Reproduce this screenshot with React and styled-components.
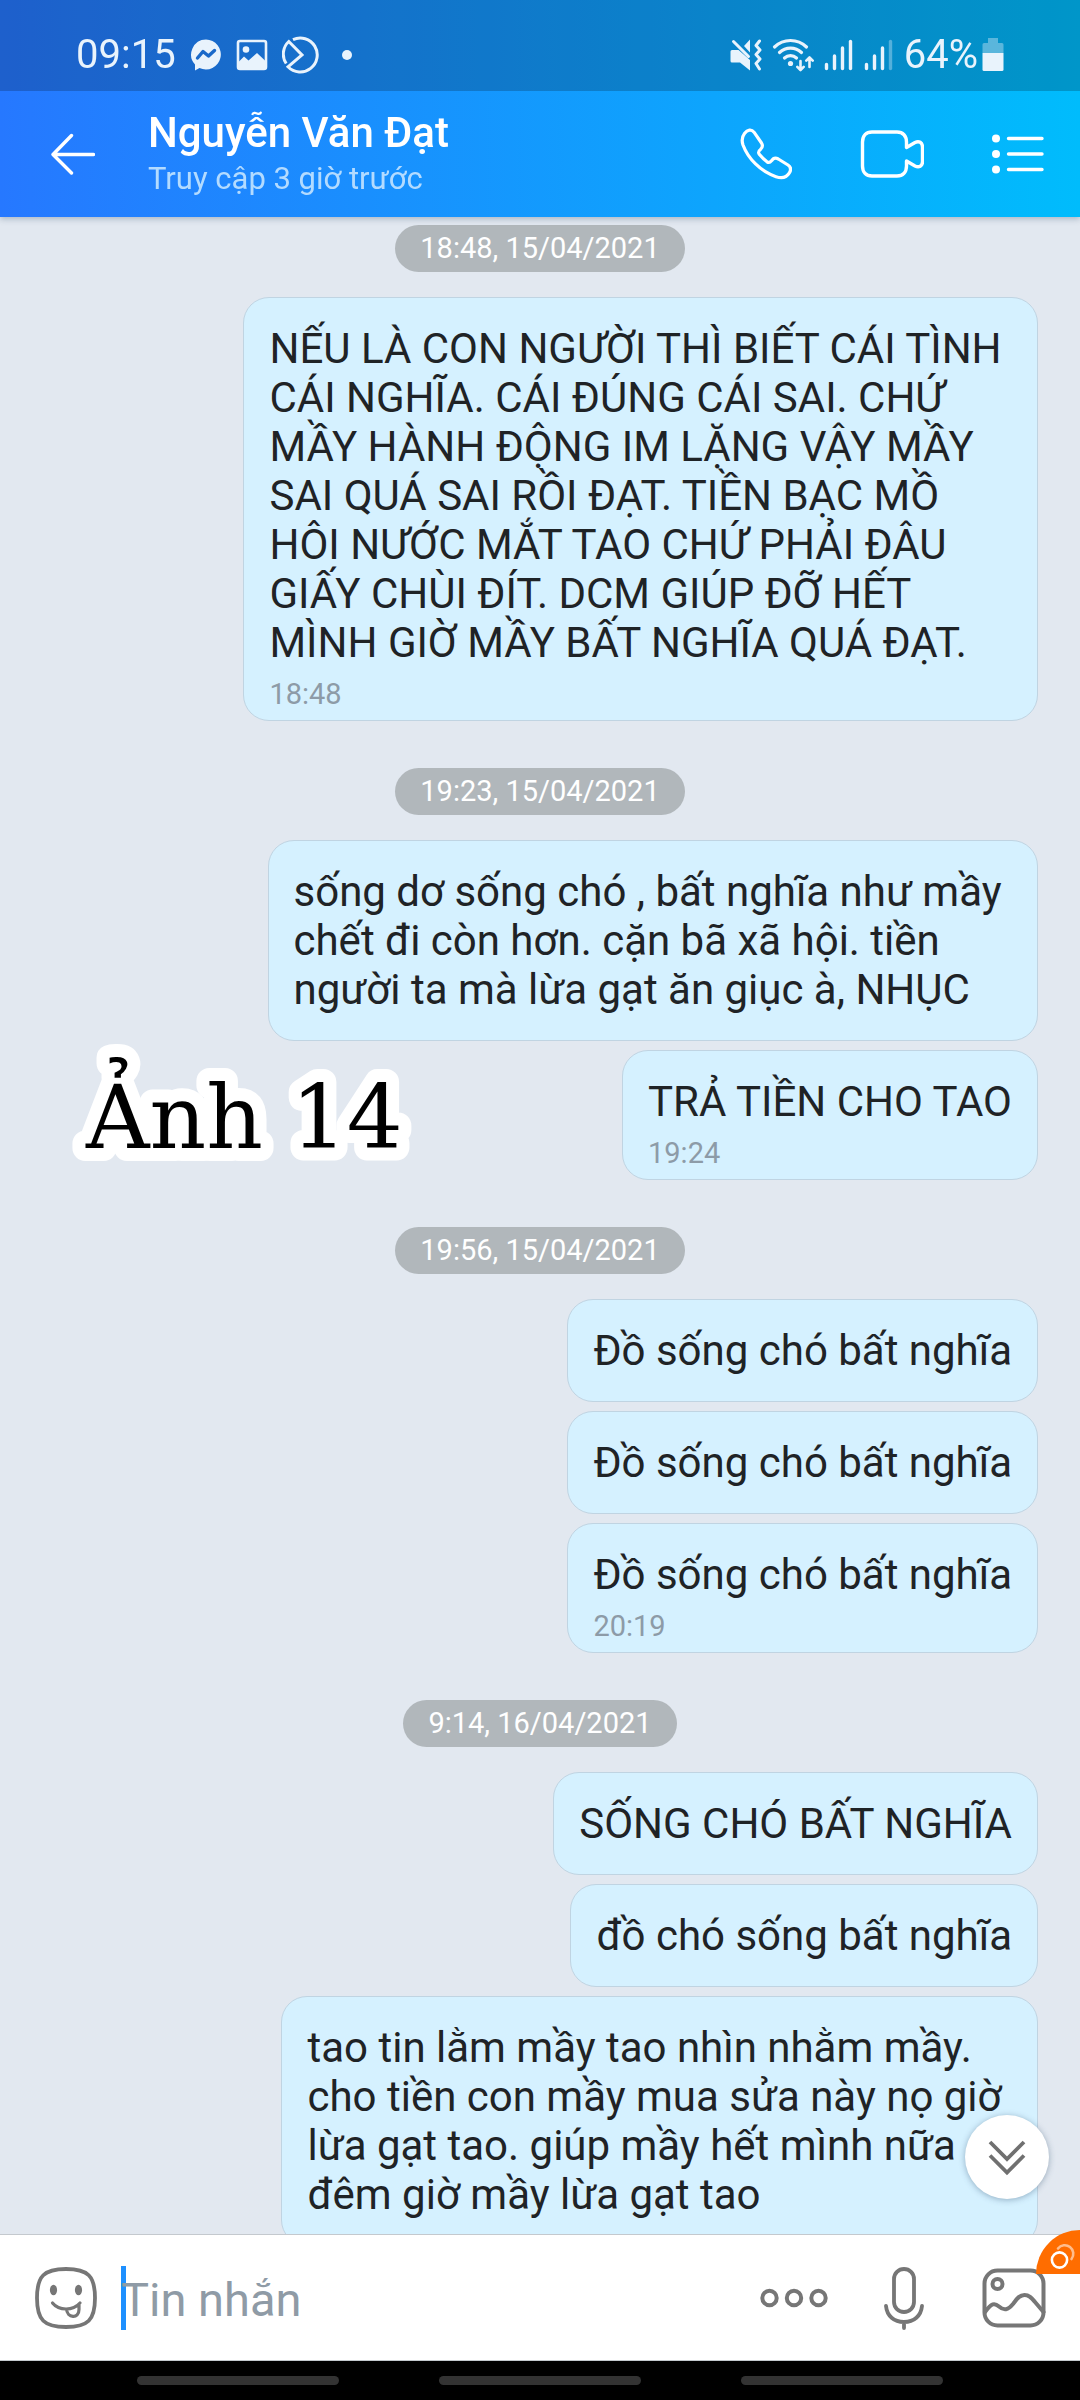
import React from "react";
import styled, { createGlobalStyle } from "styled-components";

const GlobalStyle = createGlobalStyle`
  * { box-sizing: border-box; }
  body { margin: 0; background: #000; }
  button, input { font: inherit; }
`;

const Screen = styled.div`
  position: relative;
  display: flex;
  flex-direction: column;
  height: 100vh;
  overflow: hidden;
  font-family: Roboto, "Noto Sans", sans-serif;
  color: #1f2326;
`;

const TopArea = styled.div`
  position: relative;
  z-index: 1;
  background: linear-gradient(90deg, #2678ff, #00bcfc);
  box-shadow: 0 2px 6px rgba(40, 70, 100, 0.3);
`;

const StatusBar = styled.div`
  display: flex;
  align-items: center;
  justify-content: space-between;
  height: 91px;
  padding: 18px 76px 0 76px;
  background: rgba(0, 0, 0, 0.2);
  color: #e9f3fc;
  font-size: 40px;
  line-height: 48px;
`;

const StatusGroup = styled.div`
  display: flex;
  align-items: center;
  gap: ${(p) => p.$gap}px;
`;

const Icon = styled.svg`
  display: block;
  flex: none;
  fill: none;
  stroke: currentColor;
  stroke-linecap: ${(p) => (p.$sharp ? "butt" : "round")};
  stroke-linejoin: ${(p) => (p.$sharp ? "miter" : "round")};
`;

const Header = styled.header`
  display: flex;
  align-items: center;
  height: 126px;
  padding: 0 36px 0 51px;
  color: #fff;
`;

const IconButton = styled.button`
  display: block;
  flex: none;
  padding: 0;
  border: 0;
  background: none;
  color: inherit;
  cursor: pointer;
`;

const Contact = styled.div`
  flex: 1;
  min-width: 0;
  padding-left: 53px;
`;

const Name = styled.h1`
  margin: 0;
  font-size: 42px;
  line-height: 50px;
  font-weight: 500;
`;

const LastSeen = styled.p`
  margin: 0;
  font-size: 31px;
  line-height: 42px;
  color: #b3dbff;
`;

const HeaderActions = styled.div`
  display: flex;
  align-items: center;
  gap: 68px;
`;

const Messages = styled.main`
  position: relative;
  flex: 1;
  min-height: 0;
  display: flex;
  flex-direction: column;
  padding: 8px 42px 0;
  overflow-y: auto;
  scrollbar-width: none;
  background: #e2e8f0;
`;

const Group = styled.section`
  display: flex;
  flex-direction: column;
  align-items: flex-end;
  gap: 9px;
  margin-bottom: 47px;
`;

const DatePill = styled.time`
  align-self: center;
  margin-bottom: 16px;
  padding: 0 25px;
  border-radius: 24px;
  background: #b1b7bb;
  color: #fff;
  font-size: 29px;
  line-height: 47px;
`;

const Bubble = styled.article`
  padding: 26px 25px ${(p) => (p.$timed ? 9 : 26)}px;
  border: 1px solid #c0d4e2;
  border-radius: 26px;
  background: #d5f1ff;
`;

const BubbleText = styled.p`
  margin: 0;
  font-size: 42px;
  line-height: 49px;
  white-space: break-spaces;
`;

const SentAt = styled.time`
  display: block;
  margin-top: 10px;
  font-size: 29px;
  line-height: 34px;
  color: #8d9ba7;
`;

const Sticker = styled.svg`
  position: absolute;
  left: 64px;
  top: 822px;
  overflow: visible;
  font-family: "DejaVu Serif", serif;
  font-size: 88px;
  fill: #000;
  stroke: #fff;
  stroke-width: 26px;
  stroke-linejoin: round;
  paint-order: stroke fill;
`;

const ScrollDown = styled.button`
  position: absolute;
  right: 31px;
  bottom: 201px;
  display: grid;
  place-items: center;
  width: 84px;
  height: 84px;
  padding: 0;
  border: 0;
  border-radius: 50%;
  background: #fff;
  color: #707070;
  box-shadow: 0 1px 6px rgba(60, 90, 120, 0.45);
`;

const Composer = styled.form`
  position: relative;
  display: flex;
  align-items: center;
  height: 127px;
  padding: 0 34px;
  border-top: 1px solid #c4c9ce;
  border-bottom: 1px solid #c4c9ce;
  background: #fff;
  color: #767676;
`;

const Field = styled.label`
  position: relative;
  flex: 1;
  min-width: 0;
  margin-left: 23px;
`;

const Caret = styled.span`
  position: absolute;
  left: 0;
  top: 0;
  width: 5px;
  height: 64px;
  background: #1e90ff;
`;

const TextBox = styled.input`
  position: relative;
  display: block;
  width: 100%;
  height: 64px;
  padding: 4px 0 0;
  border: 0;
  outline: 0;
  background: none;
  color: #1f2326;
  font-size: 47px;
  &::placeholder { color: #8f9ba6; opacity: 1; }
`;

const ComposerActions = styled.div`
  display: flex;
  align-items: center;
  gap: 56px;
`;

const CornerBadge = styled.div`
  position: absolute;
  right: 0;
  top: -5px;
  width: 44px;
  height: 44px;
  border-top-left-radius: 44px;
  background: #ff6d00;
  color: #fff;
`;

const NavBar = styled.nav`
  display: flex;
  justify-content: center;
  gap: 100px;
  height: 39px;
  padding-top: 15px;
  background: #000;
`;

const NavHandle = styled.button`
  width: 202px;
  height: 9px;
  padding: 0;
  border: 0;
  border-radius: 5px;
  background: #333;
`;

const MessengerIcon = () => (
  <Icon width="32" height="34" viewBox="0 0 32 34" stroke="none">
    <path fill="currentColor" stroke="none" d="M16 1.500a15 15 0 1 1-6.500 28.600L5 32.500v-6A15 15 0 0 1 16 1.500z" />
    <path d="M7.500 20 13 13.500l5.500 4.500 6-5.500" stroke="#1a69c9" strokeWidth="3.400" />
  </Icon>
);

const GalleryIcon = () => (
  <Icon width="32" height="32" viewBox="0 0 32 32" strokeWidth="2.600">
    <rect x="2" y="2" width="28" height="28" rx="2" />
    <circle cx="10" cy="10.500" r="3.300" fill="currentColor" stroke="none" />
    <path d="M2.500 23 8 17.500l4.500 4L21 14l8.500 8v7.500h-27z" fill="currentColor" stroke="none" />
  </Icon>
);

const ClockIcon = () => (
  <Icon $sharp width="38" height="38" viewBox="0 0 38 38" strokeWidth="3">
    <path d="M11 3.600A17 17 0 1 1 6 30.800L20 19 6.800 5.500A17 17 0 0 0 4.200 27.500" />
  </Icon>
);

const MuteIcon = () => (
  <Icon width="32" height="34" viewBox="0 0 32 34" strokeWidth="3">
    <path d="M2 12h6.500l11.500 10v10.500L10 24.500H2A1.500 1.500 0 0 1 .5 23v-9.500A1.500 1.500 0 0 1 2 12zM20 1.500v13l-6-6.500z" fill="currentColor" stroke="none" />
    <path d="M3.500 3.500 18.500 18.500" />
    <path d="M29.500 3l-3.500 4.500 4 4.500-4 4.500 4 4.500-4 4.500 3.500 5.500" />
  </Icon>
);

const WifiIcon = () => (
  <Icon width="42" height="34" viewBox="0 0 42 34" strokeWidth="3.200">
    <path d="M2.500 9a23 23 0 0 1 32 0M7.500 14.500a16 16 0 0 1 22 0M12.500 20a9 9 0 0 1 12 0" />
    <circle cx="18.500" cy="25.500" r="2.600" fill="currentColor" stroke="none" />
    <path d="M28.500 23v8.500M25.300 28.800l3.200 3.200 3.200-3.200M37.500 29v-8.500M34.300 22.700l3.200-3.200 3.200 3.200" strokeWidth="2.600" />
  </Icon>
);

const SignalIcon = ({ weak }) => (
  <Icon width="30" height="32" viewBox="0 0 30 32" strokeWidth="3.400">
    <path d="M2.500 25.500v4M10.500 17v12.500M18.500 9v20.500" />
    <path d="M26.500 2.500v27" opacity={weak ? 0.35 : 1} />
  </Icon>
);

const BatteryIcon = () => (
  <Icon width="22" height="34" viewBox="0 0 22 34">
    <g fill="currentColor" stroke="none">
      <path d="M6 0h10v5h4a1.500 1.500 0 0 1 1.500 1.500V15H.5V6.500A1.500 1.500 0 0 1 2 5h4z" opacity=".38" />
      <path d="M.5 15h21v16.500A1.500 1.500 0 0 1 20 33H2a1.500 1.500 0 0 1-1.500-1.500z" />
    </g>
  </Icon>
);

const BackIcon = () => (
  <Icon width="44" height="42" viewBox="0 0 44 42" strokeWidth="3.400">
    <path d="M42.500 21.500H2M20.500 2.500 2 21.500l18.500 18.500" />
  </Icon>
);

const PhoneIcon = () => (
  <Icon width="52" height="52" viewBox="0 0 52 52" strokeWidth="3.200">
    <path d="M4.500 5.500C7.500 1.500 11.500 1 14 4.200l7.500 10.800c1.500 2.500 1 4.500-.8 6.200-2.500 2-2.800 3.300-1.200 5.300 2.500 3 4.500 5 7.500 7.300 2 1.300 3 .8 4.500-1 1.800-2.800 4-3.300 6.800-1.800l9.700 6c3 2 3.200 5 1.200 8.200-2.700 4.300-7.700 5.300-13.200 3.500C20.500 43.500 8 30.500 3 17 1.500 12.500 1.800 9 4.500 5.500z" />
  </Icon>
);

const VideoIcon = () => (
  <Icon width="64" height="48" viewBox="0 0 64 48" strokeWidth="3.400">
    <path d="M46.500 17.500V12C46.500 6 43 2 37 2H12C6 2 2.500 6 2.500 12v24c0 6 3.500 10 9.500 10h25c6 0 9.500-4 9.500-10v-5l8.500 5c4 2 7.500 0 7.500-4.200V17c0-4.500-3.500-6.500-7.500-4.500z" />
  </Icon>
);

const ListIcon = () => (
  <Icon width="52" height="40" viewBox="0 0 52 40" strokeWidth="3.400">
    <path d="M16.500 4.500h33.500M16.500 20h33.500M16.500 35.500h33.500" />
    <g fill="currentColor" stroke="none">
      <circle cx="4" cy="4.500" r="4" />
      <circle cx="4" cy="20" r="4" />
      <circle cx="4" cy="35.500" r="4" />
    </g>
  </Icon>
);

const ChevronsIcon = () => (
  <Icon $sharp width="38" height="38" viewBox="0 0 38 38" strokeWidth="3.800">
    <path d="M2 4 19 21 36 4M2 17.500l17 17 17-17" />
  </Icon>
);

const EmojiIcon = () => (
  <Icon width="64" height="64" viewBox="0 0 64 64" strokeWidth="3.800">
    <path d="M32 3c22 0 29 7 29 29s-7 29-29 29S3 54 3 32 10 3 32 3z" />
    <g fill="currentColor" stroke="none">
      <ellipse cx="19.500" cy="24" rx="3.600" ry="5.200" />
      <ellipse cx="44.500" cy="24" rx="3.600" ry="5.200" />
    </g>
    <path d="M18.500 37c6.500 8 20.500 8 27.500 0M32.500 43c.5 9 12.500 10.500 12.500.5V39" strokeWidth="3.200" />
  </Icon>
);

const MoreIcon = () => (
  <Icon width="68" height="20" viewBox="0 0 68 20" strokeWidth="4">
    <circle cx="9.500" cy="10" r="7.200" />
    <circle cx="34" cy="10" r="7.200" />
    <circle cx="58.500" cy="10" r="7.200" />
  </Icon>
);

const MicIcon = () => (
  <Icon width="42" height="64" viewBox="0 0 42 64" strokeWidth="3.800">
    <rect x="10" y="3" width="20" height="43" rx="10" />
    <path d="M2 40c1 10 8 16 18 16s17-6 18-16M20 56v6" />
  </Icon>
);

const PictureIcon = () => (
  <Icon width="64" height="60" viewBox="0 0 64 60" strokeWidth="4">
    <rect x="2.500" y="2.500" width="59" height="55" rx="13" />
    <circle cx="15.500" cy="16" r="5" />
    <path d="M3 44c6.500-9 9.500-9.500 14-5.500 5 4.500 9 3.500 14-2.500 3.500-4.500 6-9 11.500-9 5 0 7.500 3.500 10.500 7l8.500 10" />
  </Icon>
);

const RingsIcon = () => (
  <Icon width="44" height="44" viewBox="0 0 44 44" strokeWidth="2.600">
    <circle cx="23.500" cy="30" r="7.600" />
    <path d="M22 18.500A8.500 8.500 0 1 1 35.500 29" opacity=".55" />
  </Icon>
);

const groups = [
  {
    date: "18:48, 15/04/2021",
    messages: [
      {
        text:
          "NẾU LÀ CON NGƯỜI THÌ BIẾT CÁI TÌNH \nCÁI NGHĨA. CÁI ĐÚNG CÁI SAI. CHỨ \nMẦY HÀNH ĐỘNG IM LẶNG VẬY MẦY \nSAI QUÁ SAI RỒI ĐẠT. TIỀN BẠC MỒ \nHÔI NƯỚC MẮT TAO CHỨ PHẢI ĐÂU \nGIẤY CHÙI ĐÍT. DCM GIÚP ĐỠ HẾT \nMÌNH GIỜ MẦY BẤT NGHĨA QUÁ ĐẠT.",
        time: "18:48",
      },
    ],
  },
  {
    date: "19:23, 15/04/2021",
    messages: [
      {
        text:
          "sống dơ sống chó , bất nghĩa như mầy \nchết đi còn hơn. cặn bã xã hội. tiền \nngười ta mà lừa gạt ăn giục à, NHỤC",
      },
      { text: "TRẢ TIỀN CHO TAO", time: "19:24" },
    ],
  },
  {
    date: "19:56, 15/04/2021",
    messages: [
      { text: "Đồ sống chó bất nghĩa" },
      { text: "Đồ sống chó bất nghĩa" },
      { text: "Đồ sống chó bất nghĩa", time: "20:19" },
    ],
  },
  {
    date: "9:14, 16/04/2021",
    messages: [
      { text: "SỐNG CHÓ BẤT NGHĨA" },
      { text: "đồ chó sống bất nghĩa" },
      {
        text:
          "tao tin lằm mầy tao nhìn nhằm mầy. \ncho tiền con mầy mua sửa này nọ giờ \nlừa gạt tao. giúp mầy hết mình nữa \nđêm giờ mầy lừa gạt tao",
      },
    ],
  },
];

export default function App() {
  return (
    <Screen>
      <GlobalStyle />
      <TopArea>
        <StatusBar>
          <StatusGroup $gap={14}>
            <span>09:15</span>
            <MessengerIcon />
            <GalleryIcon />
            <ClockIcon />
            <Icon width="26" height="10" viewBox="0 0 26 10">
              <circle cx="13" cy="5" r="5" fill="currentColor" stroke="none" />
            </Icon>
          </StatusGroup>
          <StatusGroup $gap={10}>
            <MuteIcon />
            <WifiIcon />
            <SignalIcon />
            <SignalIcon weak />
            <StatusGroup $gap={4}>
              <span>64%</span>
              <BatteryIcon />
            </StatusGroup>
          </StatusGroup>
        </StatusBar>
        <Header>
          <IconButton type="button" aria-label="Quay lại"><BackIcon /></IconButton>
          <Contact>
            <Name>Nguyễn Văn Đạt</Name>
            <LastSeen>Truy cập 3 giờ trước</LastSeen>
          </Contact>
          <HeaderActions>
            <IconButton type="button" aria-label="Gọi thoại"><PhoneIcon /></IconButton>
            <IconButton type="button" aria-label="Gọi video"><VideoIcon /></IconButton>
            <IconButton type="button" aria-label="Tùy chọn"><ListIcon /></IconButton>
          </HeaderActions>
        </Header>
      </TopArea>

      <Messages>
        {groups.map((group) => (
          <Group key={group.date}>
            <DatePill>{group.date}</DatePill>
            {group.messages.map((message, i) => (
              <Bubble key={i} $timed={Boolean(message.time)}>
                <BubbleText>{message.text}</BubbleText>
                {message.time && <SentAt>{message.time}</SentAt>}
              </Bubble>
            ))}
          </Group>
        ))}
        <Sticker width="360" height="130" viewBox="0 0 360 130">
          <text x="22" y="109">Ảnh 14</text>
        </Sticker>
      </Messages>

      <ScrollDown type="button" aria-label="Xuống cuối"><ChevronsIcon /></ScrollDown>

      <Composer onSubmit={(e) => e.preventDefault()}>
        <IconButton type="button" aria-label="Biểu cảm"><EmojiIcon /></IconButton>
        <Field>
          <Caret />
          <TextBox type="text" placeholder="Tin nhắn" aria-label="Tin nhắn" />
        </Field>
        <ComposerActions>
          <IconButton type="button" aria-label="Thêm"><MoreIcon /></IconButton>
          <IconButton type="button" aria-label="Ghi âm"><MicIcon /></IconButton>
          <IconButton type="button" aria-label="Gửi ảnh"><PictureIcon /></IconButton>
        </ComposerActions>
        <CornerBadge><RingsIcon /></CornerBadge>
      </Composer>

      <NavBar>
        <NavHandle type="button" aria-label="Đa nhiệm" />
        <NavHandle type="button" aria-label="Trang chủ" />
        <NavHandle type="button" aria-label="Trở về" />
      </NavBar>
    </Screen>
  );
}
